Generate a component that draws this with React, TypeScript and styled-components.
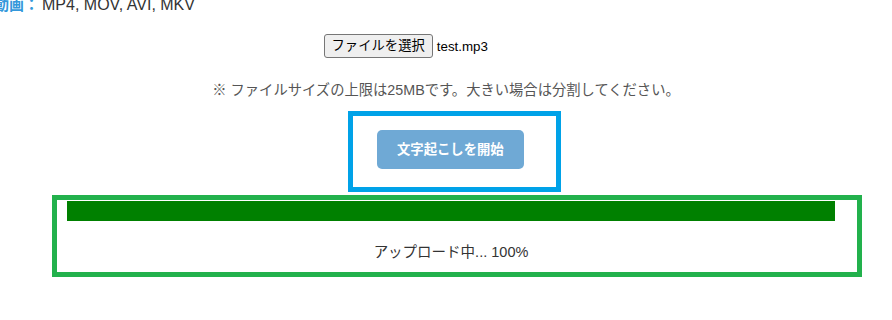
import * as React from 'react';
import styled, { createGlobalStyle } from 'styled-components';

const font = `"Liberation Sans", "Noto Sans CJK JP", sans-serif`;

const GlobalStyle = createGlobalStyle`
  html, body {
    margin: 0;
    padding: 0;
    background: #fff;
    overflow: hidden;
  }
  body {
    font-family: ${font};
    color: #333;
  }
`;

const Page = styled.div`
  width: 892px;
  height: 320px;
  overflow: hidden;
`;

const FormatLine = styled.div`
  margin: -5px 0 0 -6px;
  font-size: 16px;
  line-height: 20px;
  white-space: nowrap;
`;

const FormatLabel = styled.span`
  color: #3498db;
  font-weight: 700;
  font-size: 15px;
  margin-right: 3px;
`;

const FileRow = styled.div`
  display: flex;
  justify-content: center;
  margin-top: 19px;
`;

const FileInput = styled.label`
  display: flex;
  align-items: center;
  width: 245px;
  font-size: 13.33px;
  color: #000;
`;

const PickButton = styled.span`
  display: inline-block;
  padding: 1px 7px;
  border: 1px solid #767676;
  border-radius: 3px;
  background: #efefef;
  line-height: 20px;
  white-space: nowrap;
`;

const FileName = styled.span`
  margin-left: 4px;
  white-space: nowrap;
`;

const Note = styled.p`
  margin: 22px 0 0;
  text-align: center;
  font-size: 14.3px;
  line-height: 20px;
  color: #555;
`;

const Frame = styled.div<{ $color: string }>`
  box-sizing: border-box;
  border: 5px solid ${p => p.$color};
`;

const ButtonFrame = styled(Frame)`
  width: fit-content;
  margin: 11px 0 0 348px;
  padding: 14px 32px 18px 24px;
`;

const StartButton = styled.button`
  display: block;
  padding: 10px 20px;
  border: none;
  border-radius: 5px;
  background: #6fa9d5;
  color: #fff;
  font-family: ${font};
  font-size: 13.33px;
  font-weight: 700;
  line-height: 19px;
  cursor: not-allowed;
`;

const ProgressFrame = styled(Frame)`
  width: 810px;
  margin: 3px 0 0 52px;
  padding: 1px 22px 11px 10px;
`;

const Track = styled.div`
  height: 20px;
  background: #f0f0f0;
`;

const Fill = styled.div`
  height: 100%;
  background: #008000;
`;

const Status = styled.div`
  margin-top: 22px;
  text-align: center;
  font-size: 14.5px;
  line-height: 18px;
  color: #333;
`;

export default function App() {
  const progress = 100;

  return (
    <Page>
      <GlobalStyle />
      <FormatLine>
        <FormatLabel>動画：</FormatLabel>MP4, MOV, AVI, MKV
      </FormatLine>

      <FileRow>
        <FileInput>
          <PickButton>ファイルを選択</PickButton>
          <FileName>test.mp3</FileName>
        </FileInput>
      </FileRow>

      <Note>※ ファイルサイズの上限は25MBです。大きい場合は分割してください。</Note>

      <ButtonFrame $color='#00a2e8'>
        <StartButton disabled>文字起こしを開始</StartButton>
      </ButtonFrame>

      <ProgressFrame $color='#22b14c'>
        <Track>
          <Fill style={{ width: `${progress}%` }} />
        </Track>
        <Status>アップロード中... {progress}%</Status>
      </ProgressFrame>
    </Page>
  );
}
